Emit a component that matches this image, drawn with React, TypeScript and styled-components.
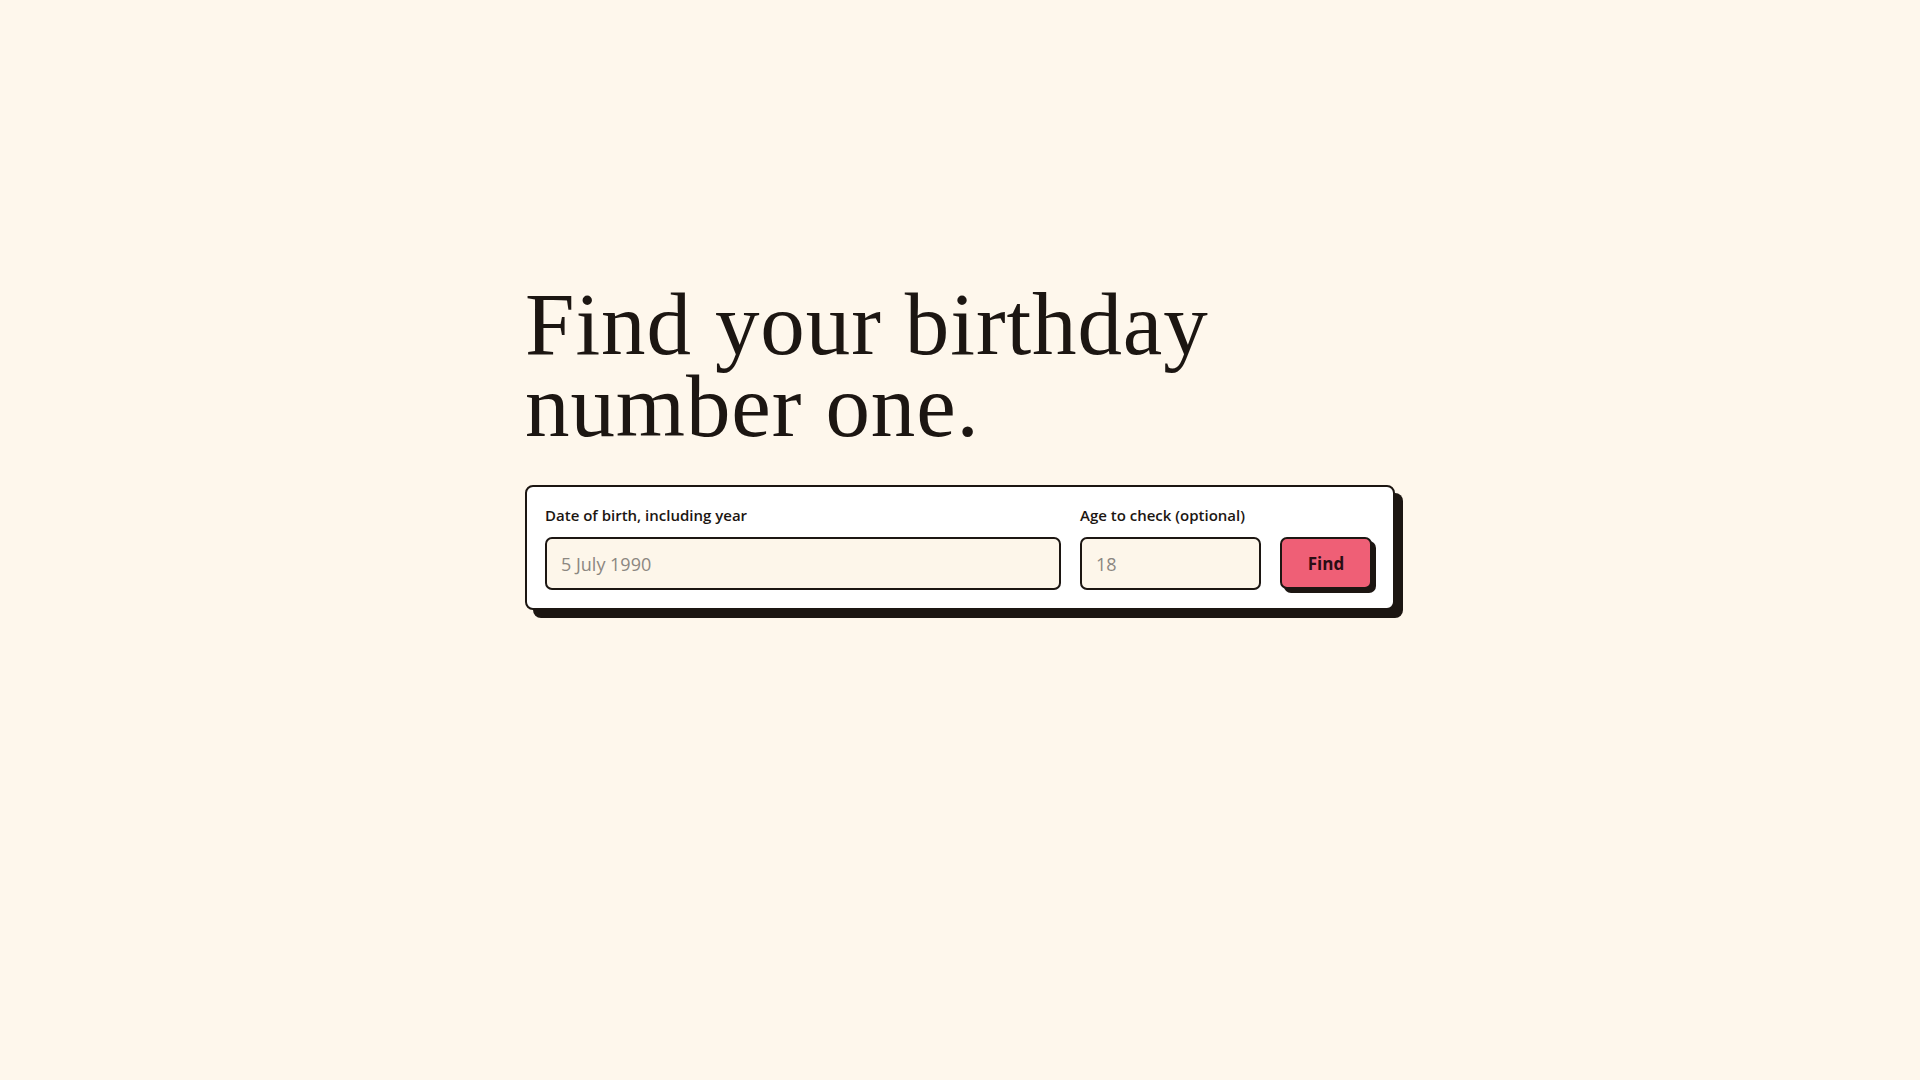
import React, { FC, useState } from "react"
import styled, { createGlobalStyle } from "styled-components"

const GlobalStyle = createGlobalStyle`
  html, body {
    margin: 0;
    padding: 0;
    background: #fef7ec;
    color: #1c1612;
  }

  * {
    box-sizing: border-box;
  }
`

const App: FC = () => {
  const [birthday, setBirthday] = useState("")
  const [age, setAge] = useState("")

  return (
    <Page>
      <GlobalStyle />
      <Container>
        <Title>
          <TitleLine>Find your birthday</TitleLine>
          <TitleLine>number one.</TitleLine>
        </Title>

        <Card onSubmit={(e) => e.preventDefault()}>
          <Field $grow>
            <Label htmlFor="dob">Date of birth, including year</Label>
            <Input
              id="dob"
              type="text"
              placeholder="5 July 1990"
              value={birthday}
              onChange={(e) => setBirthday(e.target.value)}
            />
          </Field>
          <Field $width={181}>
            <Label htmlFor="age">Age to check (optional)</Label>
            <Input
              id="age"
              type="text"
              placeholder="18"
              value={age}
              onChange={(e) => setAge(e.target.value)}
            />
          </Field>
          <FindButton type="submit">Find</FindButton>
        </Card>
      </Container>
    </Page>
  )
}

export default App

const Page = styled.main`
  min-height: 100vh;
  padding-top: 283px;
  background: #fef7ec;
`

const Container = styled.div`
  width: 870px;
  margin: 0 auto;
  display: flex;
  flex-direction: column;
  gap: 38px;
`

const Title = styled.h1`
  margin: 0;
  display: flex;
  flex-direction: column;
  font-family: "Liberation Serif", "Times New Roman", serif;
  font-weight: 400;
  font-size: 89px;
  line-height: 82px;
  letter-spacing: 0.9px;
  color: #1c1612;
`

const TitleLine = styled.span`
  display: block;
  height: 82px;
`

const Card = styled.form`
  display: flex;
  align-items: flex-end;
  gap: 19px;
  padding: 18px 18px 18px 18px;
  background: #ffffff;
  border: 2px solid #1c1612;
  border-radius: 8px;
  box-shadow: 8px 8px 0 #1c1612;
`

const Field = styled.div<{ $grow?: boolean; $width?: number }>`
  display: flex;
  flex-direction: column;
  gap: 12px;
  min-width: 0;
  flex: ${(p) => (p.$grow ? "1 1 0" : `0 0 ${p.$width}px`)};
`

const Label = styled.label`
  font-family: "Open Sans", "Liberation Sans", sans-serif;
  font-weight: 600;
  font-size: 15px;
  line-height: 20px;
  color: #1c1612;
  white-space: nowrap;
`

const Input = styled.input`
  width: 100%;
  min-width: 0;
  height: 53px;
  padding: 0 14px;
  border: 2px solid #1c1612;
  border-radius: 7px;
  background: #fdf6ea;
  font-family: "Open Sans", "Liberation Sans", sans-serif;
  font-size: 18px;
  color: #1c1612;
  outline: none;

  &::placeholder {
    color: #8c8781;
  }
`

const FindButton = styled.button`
  flex: 0 0 92px;
  height: 52px;
  margin-bottom: 1px;
  margin-right: 3px;
  border: 2px solid #1c1612;
  border-radius: 7px;
  background: #ef5f76;
  box-shadow: 4px 4px 0 #1c1612;
  font-family: "Open Sans", "Liberation Sans", sans-serif;
  font-weight: 700;
  font-size: 17px;
  color: #2a0d14;
  cursor: pointer;
`
